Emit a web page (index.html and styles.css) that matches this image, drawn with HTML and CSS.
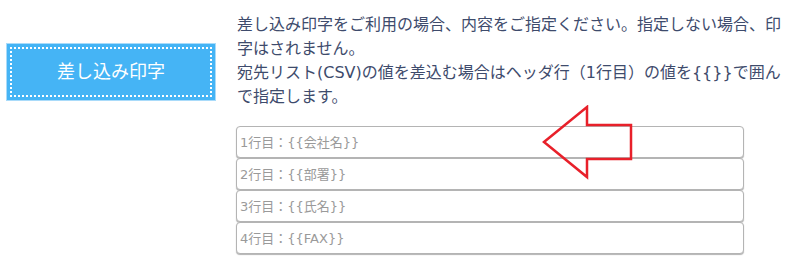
FILE: index.html
```html
<!DOCTYPE html>
<html lang="ja">
<head>
<meta charset="utf-8">
<link rel="stylesheet" href="styles.css">
</head>
<body>
<div class="row">
  <div class="label-col">
    <div class="label-btn"><span class="label-inner">差し込み印字</span></div>
  </div>
  <div class="content">
    <p class="desc">差し込み印字をご利用の場合、内容をご指定ください。指定しない場合、印字はされません。<br>宛先リスト(CSV)の値を差込む場合はヘッダ行（1行目）の値を{{}}で囲んで指定します。</p>
    <div class="fields">
      <input class="field" type="text" placeholder="1行目：{{会社名}}">
      <input class="field" type="text" placeholder="2行目：{{部署}}">
      <input class="field" type="text" placeholder="3行目：{{氏名}}">
      <input class="field" type="text" placeholder="4行目：{{FAX}}">
    </div>
  </div>
</div>
<svg class="arrow" width="100" height="80" viewBox="0 0 100 80">
  <polygon points="4,37 47,2 47,20 91,20 91,54 47,54 47,72" fill="none" stroke="#e8202a" stroke-width="2.5" stroke-linejoin="miter"/>
</svg>
</body>
</html>
```
FILE: styles.css
```css
html, body {
  margin: 0;
  padding: 0;
  background: #fff;
}
body {
  font-family: "DejaVu Sans", "Noto Sans CJK JP", sans-serif;
  position: relative;
  width: 793px;
  height: 267px;
  overflow: hidden;
}
.row {
  display: flex;
  align-items: flex-start;
}
.label-col {
  width: 236px;
  padding: 43px 0 0 6px;
  box-sizing: border-box;
}
.label-btn {
  width: 210px;
  height: 58px;
  box-sizing: border-box;
  background: #45b4f5;
  border: 1px solid #a9dbfa;
  padding: 3px;
}
.label-inner {
  display: flex;
  align-items: center;
  justify-content: center;
  height: 100%;
  box-sizing: border-box;
  border: 2px dotted #fff;
  padding-bottom: 4px;
  color: #fff;
  font-family: "Noto Sans CJK JP", sans-serif;
  font-size: 18px;
}
.content {
  width: 554px;
  padding-top: 13px;
}
.desc {
  margin: 0;
  padding-left: 1px;
  font-size: 16px;
  line-height: 24px;
  color: #3e4b6c;
}
.fields {
  margin-top: 17px;
  display: flex;
  flex-direction: column;
  width: 508px;
}
.field {
  height: 32px;
  box-sizing: border-box;
  border: 1px solid #b4b4b4;
  border-radius: 4px;
  box-shadow: 0 1px 1px rgba(0,0,0,0.3);
  padding: 0 3px;
  margin: 0;
  font-family: "DejaVu Sans", "Noto Sans CJK JP", sans-serif;
  font-size: 13px;
  color: #555;
  background: #fff;
  outline: none;
}
.field::placeholder {
  color: #9a9a9a;
}
.arrow {
  position: absolute;
  left: 540px;
  top: 105px;
}
```
